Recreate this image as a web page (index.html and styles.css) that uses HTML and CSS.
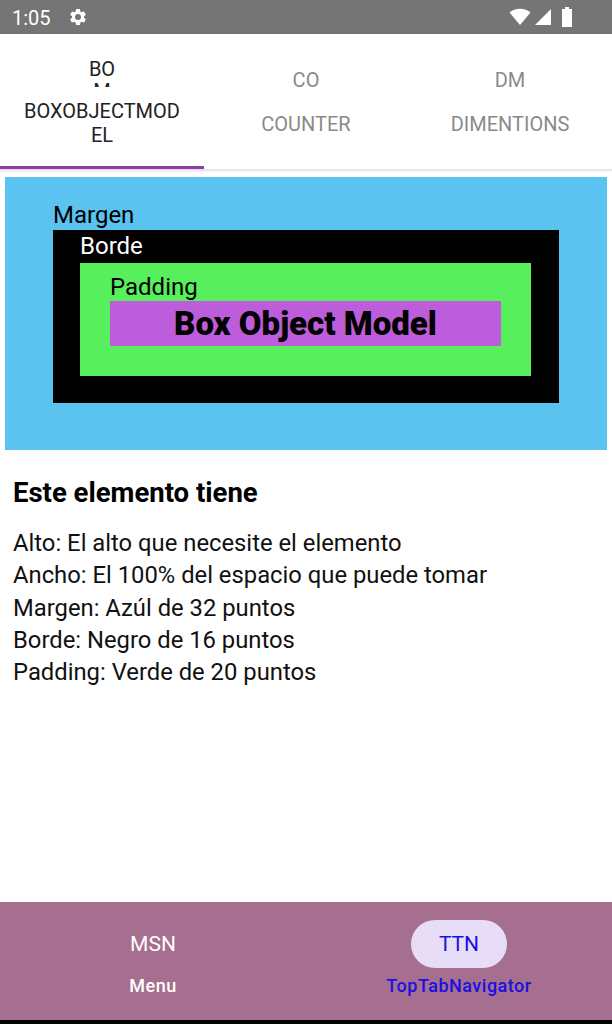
FILE: index.html
```html
<!DOCTYPE html>
<html>
    <head>
        <meta charset="utf-8" />
        <title>Box Object Model</title>
        <link rel="stylesheet" href="styles.css">
    </head>
    <body>
        <div class="status">
            <span class="time">1:05</span>
            <svg class="gear" width="20" height="20" viewBox="0 0 24 24"><path fill="#fff" d="M19.14 12.94c.04-.3.06-.61.06-.94 0-.32-.02-.64-.07-.94l2.03-1.58a.49.49 0 0 0 .12-.61l-1.920-3.32a.49.49 0 0 0-.59-.22l-2.39.96c-.5-.38-1.03-.7-1.62-.94l-.36-2.54a.48.48 0 0 0-.48-.41h-3.840c-.24 0-.43.17-.47.41l-.36 2.54c-.59.24-1.13.57-1.62.94l-2.39-.96a.48.48 0 0 0-.59.22L2.74 8.870c-.12.21-.08.47.12.61l2.03 1.58c-.05.3-.09.63-.09.94s.02.64.07.94l-2.03 1.58a.49.49 0 0 0-.12.61l1.92 3.32c.12.22.37.29.59.22l2.39-.96c.5.38 1.03.7 1.62.94l.36 2.54c.05.24.24.41.48.41h3.84c.24 0 .44-.17.47-.41l.36-2.54c.59-.24 1.13-.56 1.62-.94l2.39.96c.22.08.47 0 .59-.22l1.92-3.32c.12-.22.07-.47-.12-.61l-2.01-1.58zM12 15.6A3.6 3.6 0 1 1 12 8.4a3.6 3.6 0 0 1 0 7.2z"/></svg>
            <div class="status-right">
                <svg width="22" height="18" viewBox="0 0 22 18"><path fill="#fff" d="M11 17 0.5 4.5C3.5 2 7 0.8 11 0.8S18.5 2 21.5 4.5z"/></svg>
                <svg width="18" height="18" viewBox="0 0 18 18"><path fill="#fff" d="M17 1v16H1z"/></svg>
                <svg class="battery" width="12" height="20" viewBox="0 0 12 20"><path fill="#fff" d="M4 0h4v2h3v18H1V2h3z"/></svg>
            </div>
        </div>

        <div class="tabs">
            <div class="tab active">
                <div class="tab-icon">BOM</div>
                <div class="tab-label">BOXOBJECTMODEL</div>
            </div>
            <div class="tab">
                <div class="tab-icon">CO</div>
                <div class="tab-label">COUNTER</div>
            </div>
            <div class="tab">
                <div class="tab-icon">DM</div>
                <div class="tab-label">DIMENTIONS</div>
            </div>
        </div>

        <div class="content">
            <div class="margin-box">
                <div class="box-label">Margen</div>
                <div class="border-box">
                    <div class="box-label white">Borde</div>
                    <div class="padding-box">
                        <div class="box-label pad">Padding</div>
                        <div class="element">Box Object Model</div>
                    </div>
                </div>
            </div>

            <div class="info">
                <h2>Este elemento tiene</h2>
                <p>Alto: El alto que necesite el elemento</p>
                <p>Ancho: El 100% del espacio que puede tomar</p>
                <p>Margen: Azúl de 32 puntos</p>
                <p>Borde: Negro de 16 puntos</p>
                <p>Padding: Verde de 20 puntos</p>
            </div>
        </div>

        <div class="bottom-nav">
            <div class="nav-item">
                <div class="nav-icon">MSN</div>
                <div class="nav-label">Menu</div>
            </div>
            <div class="nav-item current">
                <div class="nav-icon">TTN</div>
                <div class="nav-label">TopTabNavigator</div>
            </div>
        </div>
        <div class="sys-bar"></div>
    </body>
</html>
```

FILE: styles.css
```css
* {
    margin: 0;
    padding: 0;
    box-sizing: border-box;
}

body {
    width: 612px;
    height: 1024px;
    font-family: Roboto, "Noto Sans", sans-serif;
    background-color: #fff;
    display: flex;
    flex-direction: column;
    overflow: hidden;
}

/* barra de estado */
.status {
    height: 34px;
    background-color: #757575;
    display: flex;
    align-items: center;
    padding: 0 0 0 12px;
    color: #fff;
}

.time {
    font-size: 20px;
    margin-top: 1px;
}

.gear {
    margin-left: 17px;
}

.status-right {
    margin-left: auto;
    margin-right: 39px;
    display: flex;
    align-items: center;
    gap: 3px;
}

.status-right .battery {
    margin-left: 6px;
}

/* tabs de arriba */
.tabs {
    height: 136px;
    display: flex;
    border-bottom: 1px solid #e2e2e2;
    box-shadow: 0 1px 2px rgba(0, 0, 0, 0.12);
}

.tab {
    flex: 1;
    display: flex;
    flex-direction: column;
    align-items: center;
    justify-content: center;
    padding-top: 5px;
    color: #8a8a8a;
    border-bottom: 3px solid transparent;
}

.tab.active {
    color: #222;
    border-bottom-color: #8e3aa9;
}

.tab-icon {
    width: 34px;
    height: 29px;
    overflow: hidden;
    text-align: center;
    font-size: 20px;
    line-height: 22px;
    word-break: break-all;
}

.tab-label {
    margin-top: 14px;
    width: 162px;
    text-align: center;
    font-size: 20px;
    line-height: 24px;
    word-break: break-all;
}

.tab.active .tab-label {
    margin-top: 12px;
}

/* contenido */
.content {
    flex: 1;
    padding: 7px 5px 0 5px;
}

.margin-box {
    background-color: #5ac3f0;
    padding: 24px 48px 47px 48px;
}

.box-label {
    font-size: 24px;
    line-height: 29px;
    color: #000;
}

.border-box {
    background-color: #000;
    padding: 0 28px 27px 27px;
}

.box-label.white {
    color: #fff;
    line-height: 33px;
}

.padding-box {
    background-color: #58ef5c;
    padding: 10px 30px 30px 30px;
}

.box-label.pad {
    line-height: 28px;
}

.element {
    background-color: #bd5ddb;
    height: 45px;
    line-height: 46px;
    text-align: center;
    font-size: 33px;
    font-weight: 900;
    color: #000;
}

.info {
    padding: 27px 8px 0 8px;
}

.info h2 {
    font-size: 27.5px;
    font-weight: 700;
    line-height: 32px;
    margin-bottom: 18px;
    color: #000;
}

.info p {
    font-size: 23.8px;
    line-height: 32.3px;
    color: #111;
}

/* navegacion de abajo */
.bottom-nav {
    height: 118px;
    background-color: #a66e8f;
    display: flex;
}

.nav-item {
    flex: 1;
    display: flex;
    flex-direction: column;
    align-items: center;
    padding-top: 18px;
    color: #fff;
}

.nav-icon {
    width: 96px;
    height: 48px;
    line-height: 48px;
    border-radius: 24px;
    text-align: center;
    font-size: 21px;
}

.nav-label {
    margin-top: 7px;
    font-size: 18px;
    font-weight: 500;
    line-height: 22px;
    letter-spacing: 0.5px;
}

.nav-item.current {
    color: #1a10e0;
}

.nav-item.current .nav-icon {
    background-color: #e8ddf6;
}

.sys-bar {
    height: 4px;
    background-color: #000;
}
```
